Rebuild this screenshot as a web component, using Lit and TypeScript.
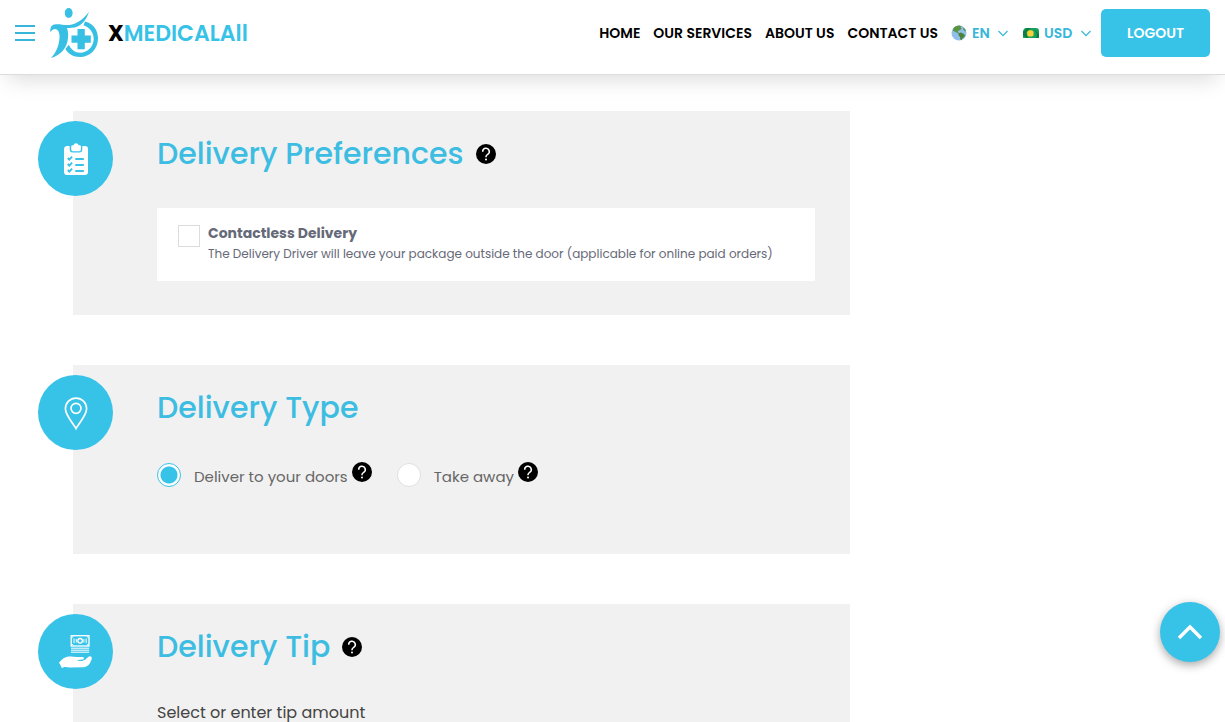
import { LitElement, html, svg, css } from "lit";
import { customElement, property, state } from "lit/decorators.js";

const chevron = html`<svg class="chevron" viewBox="0 0 10 7" width="10" height="7" aria-hidden="true">
  <path d="M0.5 1l4.5 4.7L9.5 1" fill="none" stroke="currentColor" stroke-width="1.2" />
</svg>`;

const globe = html`<svg viewBox="0 0 16 16" width="16" height="16" aria-hidden="true">
  <circle cx="8" cy="8" r="7.5" fill="#8fbfea" />
  <path d="M2.200 3.600C3.600 1.600 6.200.4 8.600.6l2 .8-1 1.300 1 .9-1.600 1.600-1.600.4-.8 1.500 1.500.8.4 1-1.800-.7L3.600 6.400 2 5.800z" fill="#5b9440" />
  <path d="M7.600 8.200l2.400-.8 2.400 1.300 1.600 1.200-.7 2.200-2 1.400-.9 1.800-1.100-.8-.3-2.600-1.500-1.700z" fill="#4d8238" />
  <path d="M12.400 2.400l1.900 2 .6 2.200-1.300-.6-1.500-1.700z" fill="#5b9440" />
</svg>`;

const banknote = html`<svg viewBox="0 0 16 10" width="16" height="10" aria-hidden="true">
  <path d="M2 0h11a3 3 0 0 1 3 3v7H0V2.500z" fill="#17a05d" />
  <path d="M4 0h4L3 4.500 5 10H3L0 7V4z" fill="#0b7d45" />
  <path d="M11 1l5 5v4h-3l1-4z" fill="#0b7d45" />
  <rect x="4.200" y="2.200" width="6.400" height="6.400" rx="2.600" fill="#f7d038" />
</svg>`;

const clipboard = svg`
  <path fill="#fff" d="M28.500 25h3.200v3.600a3 3 0 0 0 3 3h6.600a3 3 0 0 0 3-3V25h2.700a3 3 0 0 1 3 3v23a3 3 0 0 1-3 3H29a3 3 0 0 1-3-3V28a3 3 0 0 1 2.500-3z" />
  <path fill="#fff" d="M33.200 25.500a1.500 1.500 0 0 1 1.500-1.300h.8a2.700 2.700 0 0 1 5.200 0h.8a1.500 1.500 0 0 1 1.500 1.300v3a1.700 1.700 0 0 1-1.700 1.700h-6.400a1.700 1.700 0 0 1-1.700-1.700z" />
  <path fill="none" stroke="#37c2e8" stroke-width="1.900" d="M37.300 38h8.500M37.300 44h8.500M37.300 50h8.500M29.800 37l1.500 1.600 2.800-3M29.800 43l1.500 1.600 2.800-3M29.800 49l1.500 1.600 2.800-3" />`;

const pin = svg`
  <g fill="none" stroke="#fff" stroke-width="1.700">
    <path d="M38 53.500c-2-4.200-10.600-13-10.600-19.800a10.600 10.600 0 0 1 21.200 0c0 6.800-8.600 15.600-10.600 19.800z" />
    <circle cx="38" cy="33.300" r="5" />
  </g>`;

const tip = svg`
  <g fill="none" stroke="#fff">
    <rect x="33.200" y="21.700" width="17.800" height="10.300" stroke-width="1.300" />
    <path d="M33 34.200h18.200M33 36.200h18.200M33 38.200h18.200" stroke-width="1" />
    <circle cx="42.100" cy="26.800" r="2.300" stroke-width="1.300" />
    <path d="M36 24.500v4.700M48.200 24.500v4.700M38.300 25v3.500M45.900 25v3.500M33.500 24l2.200-2M50.700 24L48.500 22M33.500 29.700l2.200 2M50.700 29.700l-2.200 2" stroke-width="1" />
  </g>
  <path fill="#fff" d="M21 48.500c3.500-3.700 6.200-6 10.500-6 2.500 0 4.500.4 6.500.4h6.500c1.800 0 2 2.200.3 2.500l-6.300.8c3.500 1.300 7.200.6 9-.8 2-1.500 3.200-3.400 5.200-3 1.700.4 1.100 2.800.3 4.600-1.500 3.800-4 6.200-8.500 6.300l-13 .2c-2.500-.3-4-1-6-.2l-1.500 1z" />`;

const helpIcon = html`<svg viewBox="0 0 20 20" width="20" height="20" aria-hidden="true">
  <circle cx="10" cy="10" r="10" fill="#000" />
  <path d="M6.700 7.700a3.300 3.300 0 1 1 5 2.700c-1.100.7-1.700 1.200-1.700 2.300v.6" fill="none" stroke="#fff" stroke-width="1.500" />
  <circle cx="10" cy="15.400" r="1" fill="#fff" />
</svg>`;

@customElement("site-header")
class SiteHeader extends LitElement {
  static styles = css`
    :host {
      display: flex;
      align-items: center;
      padding: 8px 15px 16px;
      background: #fff;
      border-bottom: 1px solid #dcdcdc;
      box-shadow: 0 12px 22px -8px rgba(0, 0, 0, 0.15);
      position: relative;
    }
    .menu {
      display: grid;
      gap: 5px;
      width: 20px;
      padding: 0;
      border: 0;
      background: none;
      cursor: pointer;
    }
    .bar { height: 2px; background: #37b6da; }
    .brand {
      display: flex;
      align-items: center;
      gap: 10px;
      margin-left: 15px;
      color: #37c2e8;
      font-size: 22px;
      font-weight: 600;
      line-height: 30px;
      text-decoration: none;
    }
    .brand svg { display: block; }
    .wordmark { padding-top: 2px; }
    .first { color: #000; font-weight: 700; }
    .nav {
      display: flex;
      align-items: center;
      gap: 13px;
      margin-left: auto;
      font-size: 14px;
      font-weight: 600;
      line-height: 20px;
      white-space: nowrap;
    }
    .link { color: #000; text-decoration: none; }
    .pick {
      display: flex;
      align-items: center;
      gap: 5px;
      color: #37b6da;
    }
    .pick + .pick { margin-left: 1px; }
    .pick svg { display: block; }
    .select {
      appearance: none;
      padding: 0;
      border: 0;
      background: none;
      color: inherit;
      font: inherit;
    }
    .chevron { margin: 0 1px 0 3px; }
    .logout {
      height: 48px;
      margin-left: 9px;
      padding: 0 26px;
      border: 0;
      border-radius: 5px;
      background: #37c2e8;
      color: #fff;
      font: inherit;
      font-size: 14px;
      font-weight: 600;
      cursor: pointer;
    }
  `;

  render() {
    return html`
      <button class="menu" type="button" aria-label="Menu">
        <span class="bar"></span><span class="bar"></span><span class="bar"></span>
      </button>
      <a class="brand" href="#">
        <svg viewBox="0 0 48 50" width="48" height="50" aria-hidden="true">
          <g fill="#37bfe4">
            <ellipse cx="18.700" cy="5" rx="3.900" ry="4.900" />
            <path d="M.2 24C0 19 2 16.500 6 16.300c6-.2 10 1.700 16 .2 7-1.800 12.500-7 17-12.500-2.500 7-6.500 12.500-12 14.700-3.500 1.300-7 1.200-10 1.300 1.500 4 1.500 9 .3 14C15.500 41.500 9.500 47.500 1 50 6.500 44.500 9.500 36 9.600 28.500 9.600 21.500 5 18 .2 24z" />
            <path d="M35 13.500C44 15.500 48 23 48 30.500 48 41 40 49 30 49c-7 0-12-3.500-14.600-8l3.400-4.200C21 41.500 25 44.800 30 44.800c8 0 13.700-6.500 13.700-14 0-6-3.700-11-10.200-13.500z" />
            <path d="M27.500 21h7.300v6.500h6v7.300h-6v6.400h-7.300v-6.400h-6v-7.300h6z" />
          </g>
        </svg>
        <span class="wordmark"><span class="first">X</span>MEDICALAll</span>
      </a>
      <nav class="nav">
        <a class="link" href="#">HOME</a>
        <a class="link" href="#">OUR SERVICES</a>
        <a class="link" href="#">ABOUT US</a>
        <a class="link" href="#">CONTACT US</a>
        <label class="pick">${globe}<select class="select" aria-label="Language"><option>EN</option></select>${chevron}</label>
        <label class="pick">${banknote}<select class="select" aria-label="Currency"><option>USD</option></select>${chevron}</label>
      </nav>
      <button class="logout" type="button">LOGOUT</button>
    `;
  }
}

@customElement("help-button")
class HelpButton extends LitElement {
  static styles = css`
    :host { display: flex; }
    .help {
      display: flex;
      padding: 0;
      border: 0;
      background: none;
      cursor: pointer;
    }
  `;
  render() {
    return html`<button class="help" type="button" aria-label="Help">${helpIcon}</button>`;
  }
}

@customElement("step-card")
class StepCard extends LitElement {
  @property() heading = "";
  @property({ type: Boolean }) help = false;
  @property({ attribute: false }) icon: unknown;

  static styles = css`
    :host {
      display: block;
      position: relative;
      padding: 19px 35px 34px 84px;
      background: #f1f1f1;
    }
    .badge {
      position: absolute;
      top: 10px;
      left: -35px;
      display: block;
    }
    .head {
      display: flex;
      align-items: center;
      gap: 12px;
      margin-bottom: 30px;
    }
    .title {
      margin: 0;
      color: #3dbde2;
      font-size: 30px;
      font-weight: 500;
      line-height: 48px;
    }
  `;

  render() {
    return html`
      <svg class="badge" viewBox="0 0 75 75" width="75" height="75" aria-hidden="true">
        <circle cx="37.500" cy="37.500" r="37.500" fill="#37c2e8" />
        ${this.icon}
      </svg>
      <div class="head">
        <h2 class="title">${this.heading}</h2>
        ${this.help ? html`<help-button></help-button>` : ""}
      </div>
      <slot></slot>
    `;
  }
}

@customElement("app-root")
class AppRoot extends LitElement {
  @state() private mode = "deliver";

  static styles = css`
    :host {
      display: block;
      height: 100vh;
      overflow: hidden;
      background: #fff;
      color: #444;
      font-family: Poppins, Inter, "Open Sans", sans-serif;
    }
    .page {
      display: grid;
      grid-template-columns: minmax(0, 53fr) minmax(0, 22fr);
      padding: 36px 38px 0;
    }
    .steps {
      display: grid;
      gap: 50px;
      padding-left: 35px;
    }
    .option {
      display: flex;
      gap: 8px;
      padding: 16px 21px 17px;
      background: #fff;
      color: #666977;
    }
    .check {
      appearance: none;
      flex: none;
      width: 22px;
      height: 22px;
      margin: 1px 0 0;
      border: 1px solid #dcdcdc;
      background: #fff;
    }
    .check:checked { background: #37c2e8; }
    .option-text { display: grid; gap: 2px; }
    .name { font-size: 14px; font-weight: 700; line-height: 18px; }
    .note { font-size: 12px; line-height: 20px; }
    .modes {
      display: flex;
      flex-wrap: wrap;
      gap: 25px;
      padding-bottom: 28px;
      color: #666;
      font-size: 15px;
      line-height: 30px;
    }
    .mode { display: flex; gap: 4px; }
    .choice { display: flex; gap: 13px; }
    .radio {
      appearance: none;
      width: 24px;
      height: 24px;
      margin: 1px 0 0;
      border: 1px solid #dfdfdf;
      border-radius: 50%;
      background: #fff;
    }
    .radio:checked {
      border-color: #37c2e8;
      background: radial-gradient(circle, #37c2e8 8px, #fff 9px);
    }
    .amount {
      margin: 0;
      font-size: 16px;
      line-height: 24px;
    }
    .top {
      position: fixed;
      right: 5px;
      bottom: 60px;
      display: grid;
      place-items: center;
      width: 60px;
      height: 60px;
      padding: 0;
      border: 0;
      border-radius: 50%;
      background: #37c2e8;
      box-shadow: 0 3px 10px rgba(0, 0, 0, 0.35);
      cursor: pointer;
    }
  `;

  private renderMode(value: string, label: string) {
    return html`<div class="mode">
      <label class="choice">
        <input class="radio" type="radio" name="mode" .checked=${this.mode === value} @change=${() => (this.mode = value)} />
        <span>${label}</span>
      </label>
      <help-button></help-button>
    </div>`;
  }

  render() {
    return html`
      <site-header></site-header>
      <main class="page">
        <div class="steps">
          <step-card heading="Delivery Preferences" help .icon=${clipboard}>
            <label class="option">
              <input class="check" type="checkbox" />
              <span class="option-text">
                <span class="name">Contactless Delivery</span>
                <span class="note">The Delivery Driver will leave your package outside the door (applicable for online paid orders)</span>
              </span>
            </label>
          </step-card>
          <step-card heading="Delivery Type" .icon=${pin}>
            <div class="modes">
              ${this.renderMode("deliver", "Deliver to your doors")}
              ${this.renderMode("takeaway", "Take away")}
            </div>
          </step-card>
          <step-card heading="Delivery Tip" help .icon=${tip}>
            <p class="amount">Select or enter tip amount</p>
          </step-card>
        </div>
      </main>
      <button class="top" type="button" aria-label="Back to top">
        <svg viewBox="0 0 26 16" width="26" height="16" aria-hidden="true">
          <path d="M2 14L13 3l11 11" fill="none" stroke="#fff" stroke-width="3.400" />
        </svg>
      </button>
    `;
  }
}
